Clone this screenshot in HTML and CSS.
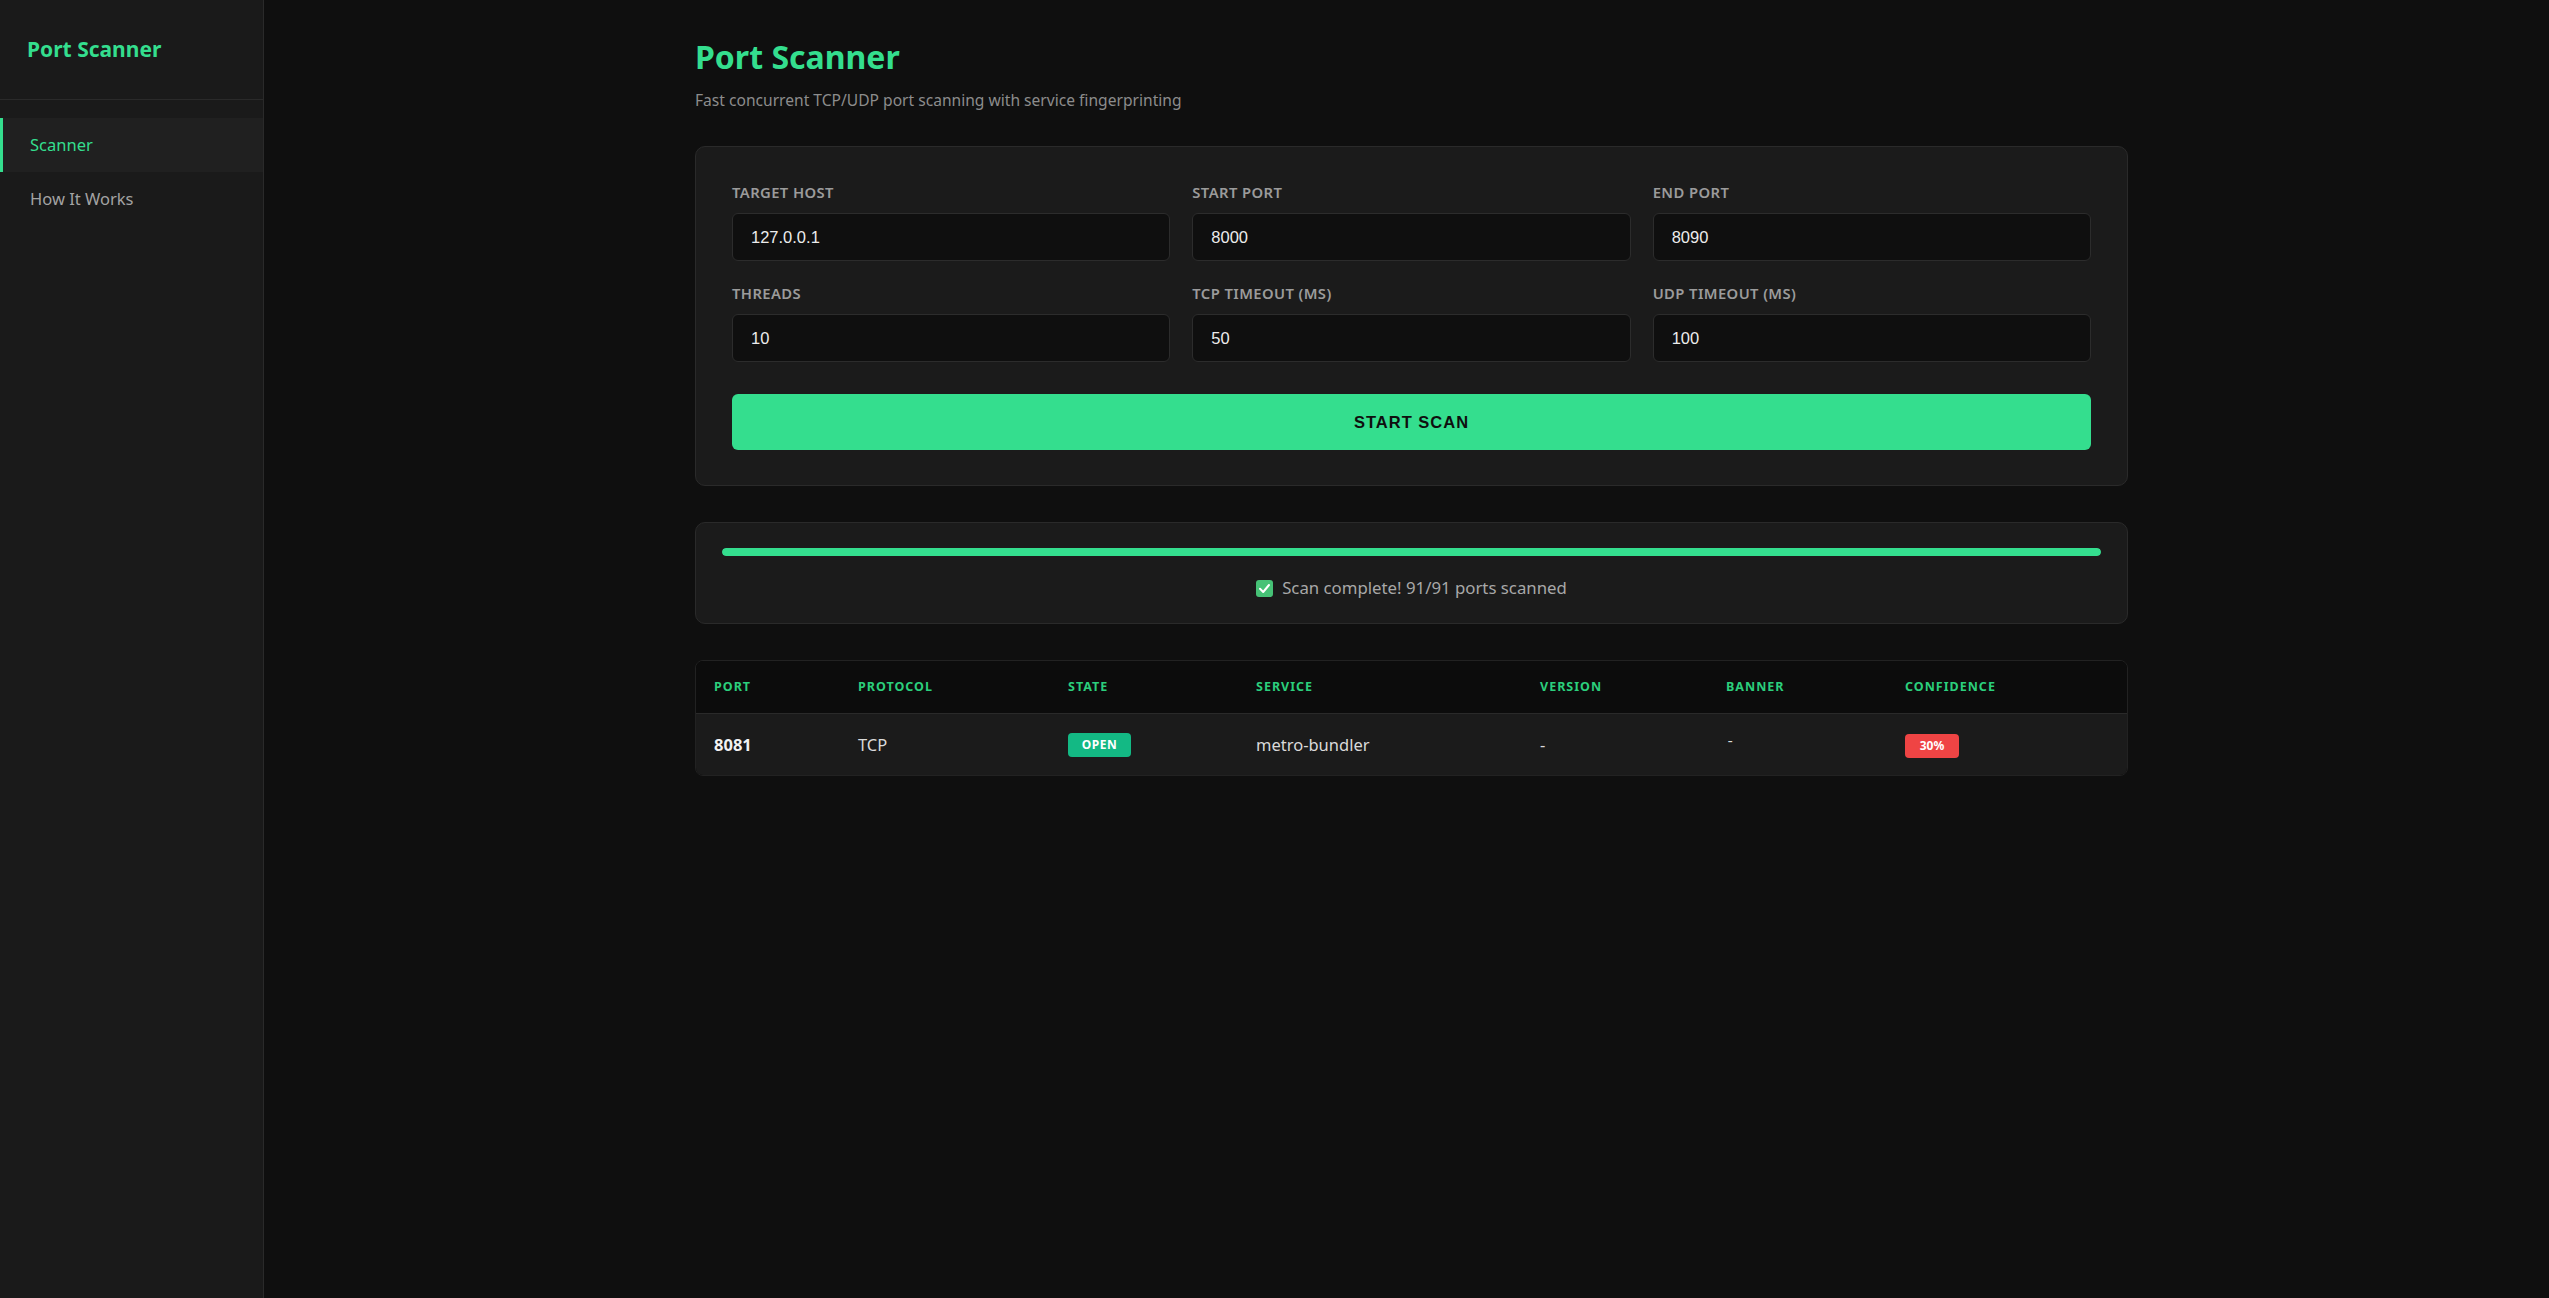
FILE: index.html
```html
<!DOCTYPE html>
<html lang="en">
<head>
<meta charset="utf-8">
<title>Port Scanner</title>
<link rel="stylesheet" href="styles.css">
</head>
<body>
<div class="app">
  <aside class="sidebar">
    <div class="brand">Port Scanner</div>
    <nav class="nav">
      <a class="nav-item active">Scanner</a>
      <a class="nav-item">How It Works</a>
    </nav>
  </aside>
  <main class="main">
    <div class="container">
      <h1 class="title">Port Scanner</h1>
      <p class="subtitle">Fast concurrent TCP/UDP port scanning with service fingerprinting</p>

      <section class="card form-card">
        <div class="grid">
          <label class="field"><span class="label">Target Host</span><input class="input" type="text" value="127.0.0.1"></label>
          <label class="field"><span class="label">Start Port</span><input class="input" type="text" value="8000"></label>
          <label class="field"><span class="label">End Port</span><input class="input" type="text" value="8090"></label>
          <label class="field"><span class="label">Threads</span><input class="input" type="text" value="10"></label>
          <label class="field"><span class="label">TCP Timeout (ms)</span><input class="input" type="text" value="50"></label>
          <label class="field"><span class="label">UDP Timeout (ms)</span><input class="input" type="text" value="100"></label>
        </div>
        <button class="btn" type="button">START SCAN</button>
      </section>

      <section class="card progress-card">
        <div class="bar"><div class="bar-fill" style="width:100%"></div></div>
        <div class="status">
          <span class="check"><svg viewBox="0 0 17 17" width="17" height="17"><rect x="0" y="0" width="17" height="17" rx="3" fill="#46c276"/><path d="M4 8.8 L7.2 12 L13 5" fill="none" stroke="#ffffff" stroke-width="2" stroke-linecap="round" stroke-linejoin="round"/></svg></span>
          <span>Scan complete! 91/91 ports scanned</span>
        </div>
      </section>

      <section class="table-card">
        <table class="results">
          <thead>
            <tr>
              <th class="c-port">Port</th>
              <th class="c-proto">Protocol</th>
              <th class="c-state">State</th>
              <th class="c-service">Service</th>
              <th class="c-version">Version</th>
              <th class="c-banner">Banner</th>
              <th class="c-conf">Confidence</th>
            </tr>
          </thead>
          <tbody>
            <tr>
              <td class="port">8081</td>
              <td>TCP</td>
              <td><span class="badge badge-open">OPEN</span></td>
              <td>metro-bundler</td>
              <td>-</td>
              <td class="mono">-</td>
              <td><span class="badge badge-low">30%</span></td>
            </tr>
          </tbody>
        </table>
      </section>
    </div>
  </main>
</div>
</body>
</html>
```

FILE: styles.css
```css
* { box-sizing: border-box; }

html, body {
  margin: 0;
  padding: 0;
  background: #0f0f0f;
  font-family: "Noto Sans", "Open Sans", sans-serif;
  color: #e0e0e0;
}

.app {
  display: flex;
  min-height: 100vh;
}

/* Sidebar */
.sidebar {
  width: 264px;
  flex: 0 0 264px;
  background: #1a1a1a;
  border-right: 1px solid #2a2a2a;
}

.brand {
  padding: 35px 27px 36px;
  font-size: 21px;
  line-height: 28px;
  font-weight: 700;
  color: #34de8e;
  border-bottom: 1px solid #2a2a2a;
}

.nav {
  display: flex;
  flex-direction: column;
  padding-top: 18px;
}

.nav-item {
  display: block;
  height: 54px;
  line-height: 54px;
  padding-left: 27px;
  border-left: 3px solid transparent;
  font-size: 16.5px;
  color: #a3a3a3;
  text-decoration: none;
}

.nav-item.active {
  background: #202020;
  border-left-color: #34de8e;
  color: #34de8e;
}

/* Main */
.main {
  flex: 1;
  padding: 37px 0 40px 10px;
}

.container {
  max-width: 1433px;
  margin: 0 auto;
}

.title {
  margin: 0;
  font-size: 32px;
  line-height: 40px;
  font-weight: 700;
  color: #34de8e;
}

.subtitle {
  margin: 13px 0 35px;
  font-size: 15.6px;
  line-height: 21px;
  color: #8c8c8c;
}

.card {
  background: #1b1b1b;
  border: 1px solid #2a2a2a;
  border-radius: 10px;
  margin-bottom: 36px;
}

.form-card {
  padding: 36px 36px 35px;
}

.grid {
  display: grid;
  grid-template-columns: repeat(3, 1fr);
  gap: 23px 22px;
}

.field {
  display: flex;
  flex-direction: column;
  gap: 12px;
}

.label {
  font-size: 14.8px;
  line-height: 18px;
  font-weight: 600;
  letter-spacing: 0.4px;
  text-transform: uppercase;
  color: #9b9b9b;
}

.input {
  width: 100%;
  height: 48px;
  padding: 0 18px;
  background: #0f0f0f;
  border: 1px solid #2c2c2c;
  border-radius: 6px;
  font-family: "Liberation Sans", Arial, sans-serif;
  font-size: 16.5px;
  color: #ececec;
  outline: none;
}

.btn {
  display: block;
  width: 100%;
  height: 56px;
  margin-top: 32px;
  border: none;
  border-radius: 6px;
  background: #34de8e;
  font-family: "Liberation Sans", Arial, sans-serif;
  font-size: 16.5px;
  font-weight: 700;
  letter-spacing: 1px;
  color: #0f0f0f;
}

/* Progress */
.progress-card {
  padding: 25px 26px 23px;
}

.bar {
  height: 8px;
  border-radius: 4px;
  background: #2a2a2a;
  overflow: hidden;
}

.bar-fill {
  height: 100%;
  border-radius: 4px;
  background: #34de8e;
}

.status {
  margin-top: 20px;
  display: flex;
  justify-content: center;
  align-items: center;
  gap: 9px;
  font-size: 16.8px;
  line-height: 24px;
  color: #a8a8a8;
}

.check {
  display: inline-flex;
  width: 17px;
  height: 17px;
}

/* Table */
.table-card {
  border: 1px solid #222222;
  border-radius: 8px;
  overflow: hidden;
  background: #0c0c0c;
}

.results {
  width: 100%;
  border-collapse: collapse;
  table-layout: fixed;
}

.results th {
  height: 52px;
  padding: 0 18px;
  text-align: left;
  font-size: 12.5px;
  font-weight: 700;
  letter-spacing: 1px;
  text-transform: uppercase;
  color: #2bcf7c;
  background: #0c0c0c;
  border-bottom: 1px solid #2a2a2a;
}

.results td {
  height: 62px;
  padding: 0 18px;
  font-size: 16.5px;
  color: #dadada;
  background: #1b1b1b;
}

.c-port { width: 144px; }
.c-proto { width: 210px; }
.c-state { width: 188px; }
.c-service { width: 284px; }
.c-version { width: 186px; }
.c-banner { width: 179px; }

.results td.port {
  font-weight: 700;
  color: #f2f2f2;
}

.results td.mono {
  font-family: "Liberation Mono", monospace;
  font-size: 14px;
  vertical-align: middle;
  padding-bottom: 4px;
}

.badge {
  display: inline-block;
  border-radius: 4px;
  font-size: 12px;
  font-weight: 700;
  color: #ffffff;
  line-height: 24px;
  text-align: center;
}

.badge-open {
  width: 63px;
  background: #13b984;
  letter-spacing: 0.5px;
}

.badge-low {
  width: 54px;
  background: #ef4444;
  margin-top: 3px;
}
```
